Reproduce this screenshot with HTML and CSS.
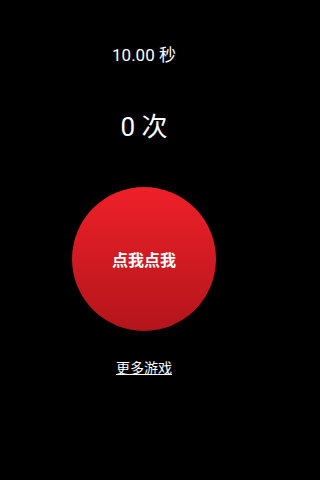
FILE: index.html
```html
<!DOCTYPE html>
<html>
<head>
<meta charset="utf-8">
<link rel="stylesheet" href="styles.css">
</head>
<body>
<main class="screen">
  <div class="timer">10.00 秒</div>
  <div class="count">0 次</div>
  <button class="tap">点我点我</button>
  <a class="more" href="#">更多游戏</a>
</main>
</body>
</html>
```
FILE: styles.css
```css
html, body {
  margin: 0;
  padding: 0;
  background: #000;
  height: 100%;
}
.screen {
  width: 288px;
  display: flex;
  flex-direction: column;
  align-items: center;
  font-family: Roboto, "Noto Sans CJK SC", sans-serif;
  color: #fff;
  padding-top: 43px;
}
.timer {
  font-size: 17px;
  line-height: 24px;
}
.count {
  font-size: 26px;
  line-height: 34px;
  margin-top: 43px;
}
.tap {
  margin-top: 43px;
  width: 144px;
  height: 144px;
  border-radius: 50%;
  border: none;
  padding: 0;
  background: linear-gradient(to bottom, #ef2029, #b3151b);
  color: #fff;
  font-family: "Noto Sans CJK SC", sans-serif;
  font-size: 16px;
  font-weight: bold;
}
.more {
  margin-top: 26px;
  font-family: "Noto Sans CJK SC", sans-serif;
  font-size: 14px;
  line-height: 20px;
  color: #fff;
  text-decoration: underline;
}
```
